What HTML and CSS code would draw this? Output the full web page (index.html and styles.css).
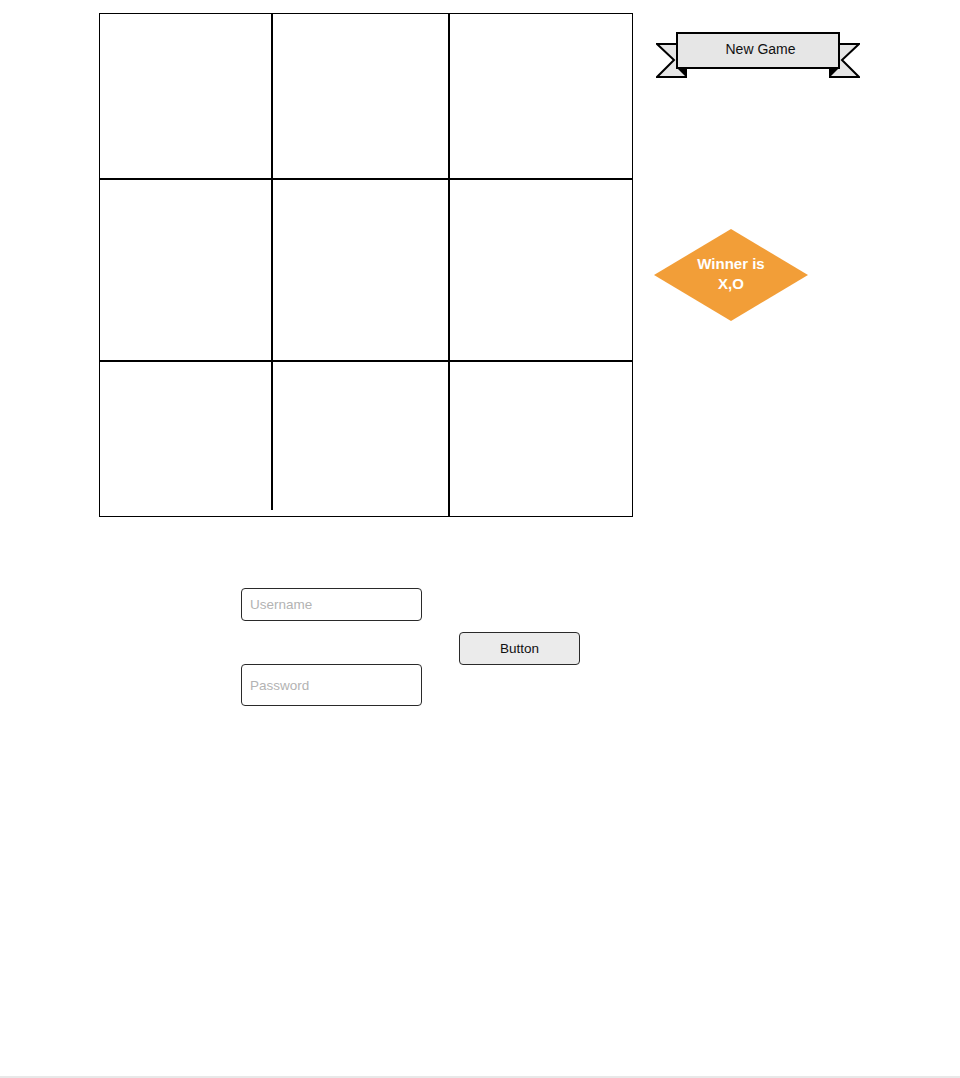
FILE: index.html
```html
<!DOCTYPE html>
<html>
<head>
<meta charset="utf-8">
<title>Tic Tac Toe</title>
<link rel="stylesheet" href="styles.css">
</head>
<body>
<div class="page">
  <div class="top">
    <div class="board">
      <div class="cell c1"></div>
      <div class="cell c2"></div>
      <div class="cell c3"></div>
      <div class="cell c4"></div>
      <div class="cell c5"></div>
      <div class="cell c6"></div>
      <div class="cell c7"></div>
      <div class="cell c8"></div>
      <div class="cell c9"></div>
    </div>
    <div class="side">
      <div class="banner">
        <svg class="banner-art" width="204" height="48" viewBox="0 0 204 48">
          <polygon points="1,13 30,13 30,46 1,46 18,29" fill="#e6e6e6" stroke="#000" stroke-width="2" stroke-linejoin="miter"/>
          <polygon points="21,37 30,37 30,46" fill="#000"/>
          <polygon points="203,13 174,13 174,46 203,46 186,29" fill="#e6e6e6" stroke="#000" stroke-width="2" stroke-linejoin="miter"/>
          <polygon points="183,37 174,37 174,46" fill="#000"/>
          <rect x="21" y="2" width="162" height="35" fill="#e6e6e6" stroke="#000" stroke-width="2"/>
        </svg>
        <div class="banner-label">New Game</div>
      </div>
      <div class="diamond">
        <svg class="diamond-art" width="154" height="92" viewBox="0 0 154 92">
          <polygon points="77,0 154,46 77,92 0,46" fill="#f29e38"/>
        </svg>
        <div class="diamond-label">Winner is<br>X,O</div>
      </div>
    </div>
  </div>
  <form class="login">
    <input class="field username" type="text" placeholder="Username">
    <button class="btn" type="button">Button</button>
    <input class="field password" type="password" placeholder="Password">
  </form>
</div>
</body>
</html>
```

FILE: styles.css
```css
html, body {
  margin: 0;
  padding: 0;
  background: #ffffff;
}

body {
  font-family: "Liberation Sans", Arial, sans-serif;
  color: #000;
}

.page {
  box-sizing: border-box;
  height: 1078px;
  padding: 13px 0 0 99px;
  border-bottom: 2px solid #e8e8e8;
}

.top {
  display: flex;
  align-items: flex-start;
}

.board {
  box-sizing: border-box;
  width: 534px;
  height: 504px;
  border: 1px solid #000;
  display: grid;
  grid-template-columns: 173px 177px 182px;
  grid-template-rows: 166px 182px 154px;
}

.cell {
  box-sizing: border-box;
}

.c1, .c2, .c4, .c5 {
  border-right: 2px solid #000;
  border-bottom: 2px solid #000;
}

.c3, .c6 {
  border-bottom: 2px solid #000;
}

.c7 {
  align-self: start;
  height: 148px;
  border-right: 2px solid #000;
}

.c8 {
  border-right: 2px solid #000;
}

.side {
  display: flex;
  flex-direction: column;
  align-items: flex-start;
  margin-left: 23px;
  padding-top: 18px;
}

.banner {
  position: relative;
  width: 204px;
  height: 48px;
}

.banner-art,
.diamond-art {
  display: block;
}

.banner-label {
  position: absolute;
  left: 23px;
  top: 0;
  width: 163px;
  height: 36px;
  display: flex;
  align-items: center;
  justify-content: center;
  font-size: 14px;
  color: #111;
}

.diamond {
  position: relative;
  width: 154px;
  height: 92px;
  margin-top: 150px;
  margin-left: -2px;
}

.diamond-label {
  position: absolute;
  inset: 0;
  display: flex;
  align-items: center;
  justify-content: center;
  text-align: center;
  color: #ffffff;
  font-weight: bold;
  font-size: 15px;
  line-height: 20px;
  padding-bottom: 2px;
  box-sizing: border-box;
}

.login {
  display: grid;
  grid-template-columns: 181px 121px;
  grid-template-rows: 33px 11px 32px 42px;
  column-gap: 37px;
  margin: 71px 0 0 142px;
}

.field {
  box-sizing: border-box;
  width: 181px;
  height: 100%;
  margin: 0;
  border: 1px solid #2a2a2a;
  border-radius: 4px;
  padding: 0 8px;
  font-family: "Liberation Sans", Arial, sans-serif;
  font-size: 13.5px;
  color: #000;
  background: #fff;
  outline: none;
}

.field::placeholder {
  color: #b3b3b3;
}

.username {
  grid-column: 1;
  grid-row: 1;
}

.password {
  grid-column: 1;
  grid-row: 4;
}

.btn {
  grid-column: 2;
  grid-row: 3;
  box-sizing: border-box;
  width: 121px;
  height: 33px;
  margin: 0;
  padding: 0;
  border: 1px solid #2a2a2a;
  border-radius: 4px;
  background: #ebebeb;
  font-family: "Liberation Sans", Arial, sans-serif;
  font-size: 13.5px;
  color: #111;
}
```
